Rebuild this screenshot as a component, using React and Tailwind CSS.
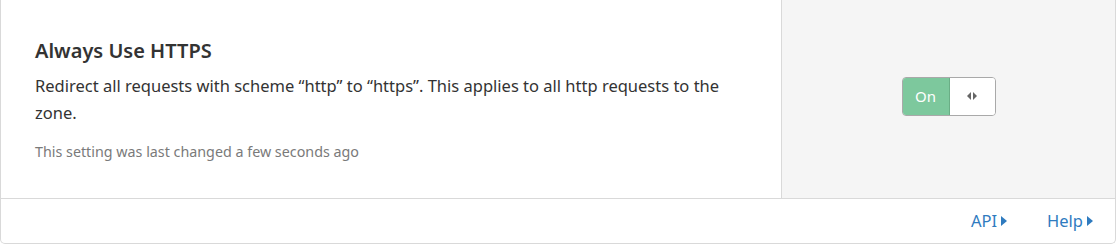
const CaretRight = () => (
  <svg width="6" height="10" viewBox="0 0 6 10" className="ml-[4px] inline-block">
    <path d="M0 0 L6 5 L0 10 Z" fill="currentColor" />
  </svg>
);

const App = () => {
  return (
    <div className="w-[1118px] h-[245px] bg-white" style={{ fontFamily: '"Noto Sans", "Open Sans", sans-serif' }}>
      <div className="w-[1116px] h-[244px] border border-t-0 border-[#d9d9d9] rounded-b-[5px] flex flex-col overflow-hidden">
        {/* Setting row */}
        <div className="flex h-[199px] border-b border-[#d9d9d9]">
          <div className="flex-1 pl-[34px] pr-6 pt-[39px]">
            <h3 className="text-[20px] leading-[24px] font-semibold text-[#333333]">Always Use HTTPS</h3>
            <p className="mt-[9px] text-[16.5px] leading-[27px] text-[#333333] max-w-[700px]">
              Redirect all requests with scheme “http” to “https”. This applies to all http requests to the zone.
            </p>
            <p className="mt-[16px] text-[14.3px] leading-[20px] text-[#7a7a7a]">This setting was last changed a few seconds ago</p>
          </div>
          <div className="w-[334px] bg-[#f5f5f5] border-l border-[#d9d9d9] flex items-center justify-center pb-[6px]">
            {/* Toggle */}
            <div className="flex h-[39px] w-[94px] rounded-[4px] border border-[#a9a9a9] overflow-hidden">
              <div className="w-[47px] bg-[#7dc89d] border-r border-[#6aae86] flex items-center justify-center text-white text-[15px]">On</div>
              <div className="flex-1 bg-white flex items-center justify-center gap-[2px] text-[#666666]">
                <svg width="4" height="8" viewBox="0 0 4 8"><path d="M4 0 L0 4 L4 8 Z" fill="currentColor" /></svg>
                <svg width="4" height="8" viewBox="0 0 4 8"><path d="M0 0 L4 4 L0 8 Z" fill="currentColor" /></svg>
              </div>
            </div>
          </div>
        </div>
        {/* Footer links */}
        <div className="flex-1 flex items-center justify-end gap-[40px] pr-[22px] text-[16.5px] text-[#2f7bbf]">
          <a className="flex items-center">API<CaretRight /></a>
          <a className="flex items-center">Help<CaretRight /></a>
        </div>
      </div>
    </div>
  );
};

export default App;
